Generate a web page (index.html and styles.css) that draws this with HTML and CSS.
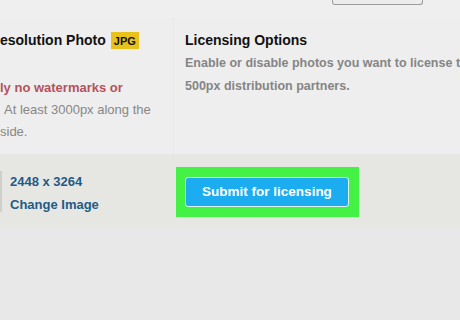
FILE: index.html
```html
<!DOCTYPE html>
<html lang="en">
<head>
    <meta charset="UTF-8">
    <meta name="viewport" content="width=device-width, initial-scale=1.0">
    <title>Licensing</title>
    <link rel="stylesheet" href="styles.css">
</head>
<body>
    <div class="topbar">
        <div class="top-btn"></div>
    </div>

    <div class="panels">
        <div class="panel panel-left">
            <div class="panel-title">
                <span>esolution Photo</span>
                <span class="badge">JPG</span>
            </div>
            <p class="note">
                <span class="warn">ly no watermarks or</span><br>
                <span class="indent">At least 3000px along the</span><br>
                side.
            </p>
        </div>
        <div class="panel panel-right">
            <div class="panel-title">Licensing Options</div>
            <p class="desc">Enable or disable photos you want to license to<br>500px distribution partners.</p>
        </div>
    </div>

    <div class="row">
        <div class="image-info">
            <div class="thumb-edge"></div>
            <div class="image-text">
                <div>2448 x 3264</div>
                <a href="#">Change Image</a>
            </div>
        </div>
        <div class="action">
            <div class="highlight">
                <button class="submit-btn">Submit for licensing</button>
            </div>
        </div>
    </div>
</body>
</html>
```

FILE: styles.css
```css
body {
    font-family: "Liberation Sans", Arial, sans-serif;
    margin: 0;
    padding: 0;
    background-color: #e8e8e9;
    overflow: hidden;
}

.topbar {
    height: 18px;
    background-color: #efefef;
    display: flex;
    justify-content: flex-end;
}

.top-btn {
    width: 89px;
    height: 4px;
    margin-right: 37px;
    background-color: #ececec;
    border: 1px solid #9c9c9c;
    border-top: none;
    border-radius: 0 0 3px 3px;
}

.panels {
    display: grid;
    grid-template-columns: 174px 1fr;
    height: 136px;
    background-color: #eeeeee;
}

.panel {
    padding-top: 13px;
    white-space: nowrap;
    overflow: hidden;
}

.panel-left {
    border-right: 1px solid #e7e7e7;
}

.panel-right {
    padding-left: 11px;
}

.panel-title {
    display: flex;
    align-items: center;
    gap: 5px;
    height: 18px;
    font-size: 14px;
    font-weight: bold;
    color: #111;
}

.badge {
    background-color: #e8c11a;
    color: #111;
    font-size: 11px;
    padding: 0 3px;
    height: 17px;
    line-height: 18px;
}

.note {
    margin: 28px 0 0 0;
    font-size: 13px;
    line-height: 22px;
    color: #878787;
}

.warn {
    color: #b5525b;
    font-weight: bold;
}

.indent {
    padding-left: 4px;
}

.desc {
    margin: 3px 0 0 0;
    font-size: 12.5px;
    line-height: 23px;
    color: #858585;
    font-weight: bold;
}

.row {
    display: grid;
    grid-template-columns: 174px 1fr;
    height: 73px;
    margin-top: 1px;
    background-color: #e6e7e2;
    align-items: center;
}

.image-info {
    display: flex;
    align-items: center;
    gap: 8px;
}

.thumb-edge {
    width: 2px;
    height: 41px;
    background-color: #cfd0ca;
}

.image-text {
    font-size: 13px;
    line-height: 23px;
    font-weight: bold;
    color: #1f5b8a;
    margin-top: 2px;
}

.image-text a {
    color: #235c86;
    text-decoration: none;
}

.action {
    padding-left: 2px;
}

.highlight {
    display: inline-block;
    background-color: #43f244;
    padding: 10px 10px 10px 9px;
}

.submit-btn {
    display: block;
    width: 164px;
    height: 30px;
    font-family: "Liberation Sans", Arial, sans-serif;
    font-size: 13.5px;
    font-weight: bold;
    color: #fff;
    background-color: #1badf0;
    border: 1px solid #dff2fb;
    border-radius: 3px;
    cursor: pointer;
}
```
